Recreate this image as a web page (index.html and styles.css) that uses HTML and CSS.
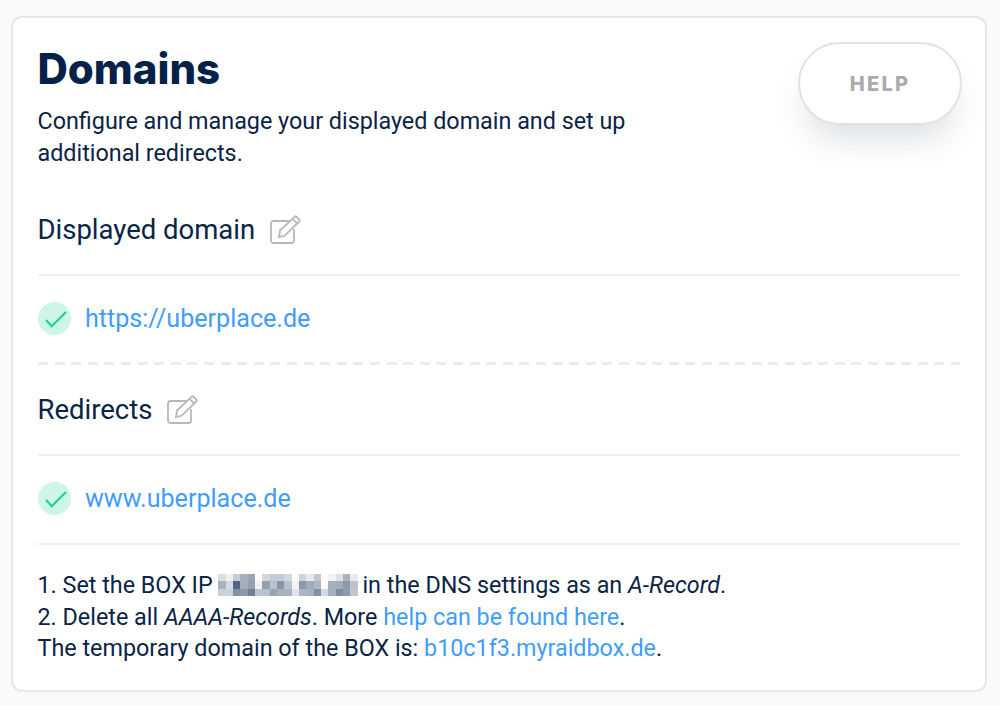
FILE: index.html
```html
<!DOCTYPE html>
<html lang="en">
<head>
<meta charset="utf-8">
<title>Domains</title>
<link rel="stylesheet" href="styles.css">
</head>
<body>
<main class="card">
  <header class="head">
    <div class="intro">
      <h1 class="title">Domains</h1>
      <p class="lead">Configure and manage your displayed domain and set up additional redirects.</p>
    </div>
    <button class="help" type="button">HELP</button>
  </header>

  <h2 class="section first">Displayed domain
    <svg class="edit" viewBox="0 0 31 29" aria-hidden="true"><path d="M20 6H3.5A2.5 2.5 0 0 0 1 8.500V25.500A2.500 2.500 0 0 0 3.500 28H21.500A2.500 2.500 0 0 0 24 25.500V14" /><path d="M10 15.500L24.500 1.800Q25.600.8 26.700 1.800L29.200 4.300Q30.200 5.500 29.200 6.500L14.500 20.800L9 22Z" /><path d="M22.500 3.800L27.300 8.500" /></svg>
  </h2>
  <div class="row">
    <svg class="ok" viewBox="0 0 33 33" aria-hidden="true"><circle class="ok-bg" cx="16.500" cy="16.500" r="16.500"/><path class="ok-mark" d="M8 18L13.700 24.200L28 10"/></svg>
    <a class="link" href="#">https://uberplace.de</a>
  </div>

  <div class="dashes"></div>

  <h2 class="section">Redirects
    <svg class="edit" viewBox="0 0 31 29" aria-hidden="true"><path d="M20 6H3.5A2.5 2.5 0 0 0 1 8.500V25.500A2.500 2.500 0 0 0 3.500 28H21.500A2.500 2.500 0 0 0 24 25.500V14" /><path d="M10 15.500L24.500 1.800Q25.600.8 26.700 1.800L29.200 4.300Q30.200 5.500 29.200 6.500L14.500 20.800L9 22Z" /><path d="M22.500 3.800L27.300 8.500" /></svg>
  </h2>
  <div class="row row-last">
    <svg class="ok" viewBox="0 0 33 33" aria-hidden="true"><circle class="ok-bg" cx="16.500" cy="16.500" r="16.500"/><path class="ok-mark" d="M8 18L13.700 24.200L28 10"/></svg>
    <a class="link" href="#">www.uberplace.de</a>
  </div>

  <div class="notes">
    <p>1. Set the BOX IP <svg class="mosaic" viewBox="0 0 19 3" shape-rendering="crispEdges" aria-hidden="true">
        <rect x="0" y="0" width="1" height="1" fill="#d8dde3"/><rect x="1" y="0" width="1" height="1" fill="#eef0f3"/><rect x="2" y="0" width="1" height="1" fill="#c8ced7"/><rect x="3" y="0" width="1" height="1" fill="#a6b0bd"/><rect x="4" y="0" width="1" height="1" fill="#9aa5b4"/><rect x="5" y="0" width="1" height="1" fill="#fff"/><rect x="6" y="0" width="1" height="1" fill="#d3d8df"/><rect x="7" y="0" width="1" height="1" fill="#c3cad3"/><rect x="8" y="0" width="1" height="1" fill="#c6ccd5"/><rect x="9" y="0" width="1" height="1" fill="#d3d8df"/><rect x="10" y="0" width="1" height="1" fill="#fbfbfc"/><rect x="11" y="0" width="1" height="1" fill="#d0d5dc"/><rect x="12" y="0" width="1" height="1" fill="#e5e8ec"/><rect x="13" y="0" width="1" height="1" fill="#c0c7d1"/><rect x="14" y="0" width="1" height="1" fill="#fff"/><rect x="15" y="0" width="1" height="1" fill="#f2f3f5"/><rect x="16" y="0" width="1" height="1" fill="#dde0e5"/><rect x="17" y="0" width="1" height="1" fill="#a9b2bf"/><rect x="18" y="0" width="1" height="1" fill="#e8eaee"/>
        <rect x="0" y="1" width="1" height="1" fill="#a9b3bf"/><rect x="1" y="1" width="1" height="1" fill="#d7dbe1"/><rect x="2" y="1" width="1" height="1" fill="#4f6682"/><rect x="3" y="1" width="1" height="1" fill="#a3aebc"/><rect x="4" y="1" width="1" height="1" fill="#93a0b0"/><rect x="5" y="1" width="1" height="1" fill="#f0f1f3"/><rect x="6" y="1" width="1" height="1" fill="#92a0b1"/><rect x="7" y="1" width="1" height="1" fill="#b9c1cb"/><rect x="8" y="1" width="1" height="1" fill="#8796a9"/><rect x="9" y="1" width="1" height="1" fill="#bac1cc"/><rect x="10" y="1" width="1" height="1" fill="#f2f3f5"/><rect x="11" y="1" width="1" height="1" fill="#8a99ab"/><rect x="12" y="1" width="1" height="1" fill="#a1acba"/><rect x="13" y="1" width="1" height="1" fill="#adb6c2"/><rect x="14" y="1" width="1" height="1" fill="#fff"/><rect x="15" y="1" width="1" height="1" fill="#a7b1be"/><rect x="16" y="1" width="1" height="1" fill="#a3adbb"/><rect x="17" y="1" width="1" height="1" fill="#8c9aac"/><rect x="18" y="1" width="1" height="1" fill="#bcc3ce"/>
        <rect x="0" y="2" width="1" height="1" fill="#cbd1d9"/><rect x="1" y="2" width="1" height="1" fill="#ccd2da"/><rect x="2" y="2" width="1" height="1" fill="#8190a4"/><rect x="3" y="2" width="1" height="1" fill="#8a98aa"/><rect x="4" y="2" width="1" height="1" fill="#6f8198"/><rect x="5" y="2" width="1" height="1" fill="#bdc4ce"/><rect x="6" y="2" width="1" height="1" fill="#b8c0cb"/><rect x="7" y="2" width="1" height="1" fill="#98a4b4"/><rect x="8" y="2" width="1" height="1" fill="#a8b2bf"/><rect x="9" y="2" width="1" height="1" fill="#a9b3c0"/><rect x="10" y="2" width="1" height="1" fill="#e0e3e8"/><rect x="11" y="2" width="1" height="1" fill="#adb6c2"/><rect x="12" y="2" width="1" height="1" fill="#a8b2bf"/><rect x="13" y="2" width="1" height="1" fill="#8393a7"/><rect x="14" y="2" width="1" height="1" fill="#d5d9df"/><rect x="15" y="2" width="1" height="1" fill="#a5afbd"/><rect x="16" y="2" width="1" height="1" fill="#7d8ea3"/><rect x="17" y="2" width="1" height="1" fill="#8e9cad"/><rect x="18" y="2" width="1" height="1" fill="#c0c7d1"/>
    </svg>in the DNS settings as an <em>A-Record</em>.</p>
    <p>2. Delete all <em>AAAA-Records</em>. More <a class="link" href="#">help can be found here</a>.</p>
    <p>The temporary domain of the BOX is: <a class="link" href="#">b10c1f3.myraidbox.de</a>.</p>
  </div>
</main>
</body>
</html>
```

FILE: styles.css
```css
* { box-sizing: border-box; }
html, body { margin: 0; height: 100%; }
body {
  background: #fafafd;
  padding: 16px 13px 15px 11px;
  font-family: Roboto, "Liberation Sans", sans-serif;
  color: #0a2447;
  overflow: hidden;
}
.card {
  height: 676px;
  background: #fff;
  border: 2px solid #e7e7ea;
  border-radius: 11px;
  padding: 0 25px 0 24.500px;
}
.head {
  display: flex;
  justify-content: space-between;
  align-items: flex-start;
}
.intro { width: 620px; }
.title {
  margin: 25px 0 0;
  font-family: Inter, "Open Sans", sans-serif;
  font-weight: 800;
  font-size: 42px;
  line-height: 52px;
  color: #04214a;
}
.lead {
  margin: 10px 0 0;
  font-size: 23.330px;
  line-height: 32px;
}
.help {
  width: 164px;
  height: 83px;
  margin: 24px -2px 0 0;
  background: #fff;
  border: 2px solid #e2e2e4;
  border-radius: 42px;
  box-shadow: 0 22px 32px -8px rgba(40, 60, 90, .16);
  font-family: Inter, sans-serif;
  font-weight: 800;
  font-size: 20px;
  letter-spacing: 2.200px;
  color: #ababab;
}
.section {
  display: flex;
  align-items: center;
  gap: 15px;
  height: 47px;
  margin: 0;
  font-size: 27.500px;
  font-weight: 400;
}
.section.first { margin-top: 37px; }
.edit {
  width: 31px;
  height: 29px;
  fill: none;
  stroke: #b8b8b8;
  stroke-width: 1.800;
}
.row {
  display: flex;
  align-items: center;
  gap: 14.500px;
  height: 88px;
  margin-top: 21px;
  border-top: 2px solid #f0f0f2;
  padding-bottom: 2px;
}
.row-last { border-bottom: 2px solid #f0f0f2; height: 91px; padding-bottom: 3px; }
.ok { width: 33px; height: 33px; flex: none; }
.ok-bg { fill: #cdf5e8; }
.ok-mark { fill: none; stroke: #1dd08d; stroke-width: 2; }
.link {
  color: #3f9dfb;
  text-decoration: none;
}
.row .link { font-size: 25.100px; }
.dashes {
  height: 3px;
  margin-bottom: 21px;
  background: repeating-linear-gradient(90deg, #ececee 0 10px, transparent 10px 16.600px);
}
.notes {
  margin-top: 25px;
  font-size: 23.330px;
  line-height: 31.500px;
}
.notes p { margin: 0; }
.mosaic {
  width: 144px;
  height: 22px;
  margin: 0 2px 0 -2px;
  vertical-align: -3px;
}
```
